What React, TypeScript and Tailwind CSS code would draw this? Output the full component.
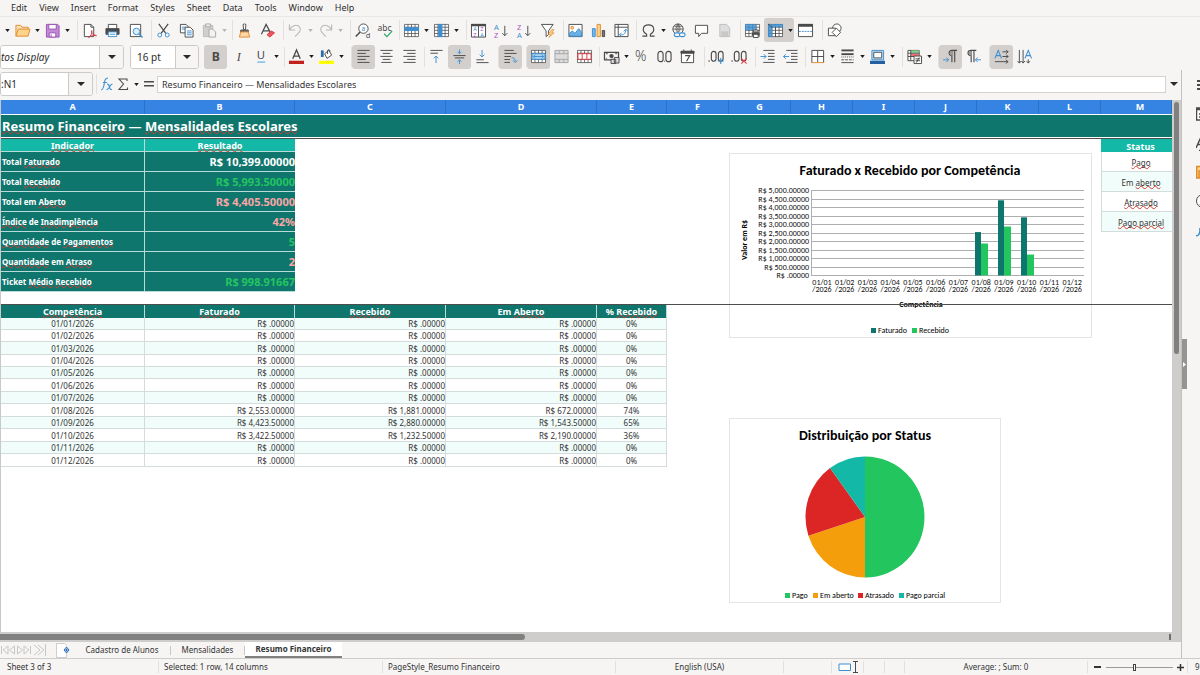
import React from "react";

const K = "#4a4a4a";
const B = "#3d8fd1";
const O = "#e08a2e";

type Drawn = Record<string, React.ReactNode>;

const sheetGrid = (
  <path d="M.5 1.5h15v13H.5zM.5 4.5h15M.5 7.8h15M.5 11.2h15M4.2 1.5v13M8 1.5v13M11.8 1.5v13" stroke={K} strokeWidth=".8" fill="#fff" />
);

const letters = { fontFamily: "'Noto Sans', sans-serif", stroke: "none" };

const icons: Drawn = {
  open: (
    <>
      <path d="M1 14V2.5h5l1.5 2H14V7" fill="#fbe3b5" stroke={O} />
      <path d="M1 14 3.5 6.5H16L14 14z" fill="#fcd48a" stroke={O} />
    </>
  ),
  save: (
    <>
      <path d="M1.5 1.500h12l1.500 1.500v12h-13.500z" fill="#c58ad6" stroke="#9a4fb3" />
      <path d="M4 1.500h8v5H4z" fill="#fff" stroke="#9a4fb3" />
      <path d="M4.500 10.500h7v4.500h-7z" fill="#fff" stroke="#9a4fb3" />
      <path d="M6.500 12v3" stroke="#9a4fb3" />
    </>
  ),
  pdf: (
    <>
      <path d="M2.500 1.500h7l3 3v10h-10z" fill="#fff" stroke={K} />
      <path d="M9.500 1.500v3h3" stroke={K} />
      <path d="M7 15.500c3-2 4-5 3.500-7.500-1.500 1 1 6 5 5.500-2-1.500-6 0-8.500 2z" stroke="#d9363e" />
    </>
  ),
  print: (
    <>
      <path d="M3.500 6V1.500h9V6" fill="#fff" stroke={K} />
      <path d="M1 6h14v6H1z" fill={K} stroke={K} />
      <path d="M3.500 9.500h9v5h-9z" fill="#fff" stroke={B} />
      <path d="M5 12h6" stroke={B} />
    </>
  ),
  preview: (
    <>
      <path d="M2.500 1.500h11v13h-11z" fill="#fff" stroke={K} />
      <circle cx="9" cy="9" r="3.500" fill="#dceefa" stroke={B} />
      <path d="M11.500 11.500l4 4" stroke={B} strokeWidth="1.500" />
    </>
  ),
  cut: (
    <>
      <path d="M3 1l7.500 10M13 1L5.500 11" stroke={K} strokeWidth="1.300" />
      <circle cx="4" cy="12.800" r="2.100" stroke={B} />
      <circle cx="12" cy="12.800" r="2.100" stroke={B} />
    </>
  ),
  copy: (
    <>
      <path d="M1.500 1.500h6l2 2v7h-8z" fill="#fff" stroke={K} />
      <path d="M3 4.500h4M3 6.500h4" stroke={B} />
      <path d="M6.500 4.500h5.500l3 3v7.500H6.500z" fill="#fff" stroke={K} />
      <path d="M8.500 8.500h5M8.500 10.500h5M8.500 12.500h5" stroke={B} />
    </>
  ),
  paste: (
    <>
      <path d="M1.500 2.500h10v12h-10z" fill="#cfcfcf" stroke="#bdbdbd" />
      <path d="M4 1h5v3H4z" fill="#efefef" stroke="#a8a8a8" />
      <path d="M7.500 6.500h4l3 3v5.500h-7z" fill="#f2f2f2" stroke="#a8a8a8" />
    </>
  ),
  brush: (
    <>
      <path d="M6.500 1.500q1.500-1 3 0L9 7H7z" fill="#fff" stroke={K} />
      <path d="M4 7.500h8v2H4z" fill="#777" stroke={K} />
      <path d="M4 9.500h8l1.500 5.500h-11z" fill="#fcd9a5" stroke={O} />
    </>
  ),
  clearfmt: (
    <>
      <path d="M1.500 12L6.500 1.500 11 10M3.500 8.500h6" stroke={K} strokeWidth="1.300" />
      <path d="M7.500 12.500l4.500-4 3.500 2-5 4.500z" fill="#ee5560" stroke="#d9363e" />
    </>
  ),
  undo: (
    <path d="M1.500 1.500v6h6M1.500 7.500C4 2 10 1 12.500 4.500c2 3 0 5-5 10" stroke="#b9b9b9" strokeWidth="1.200" />
  ),
  redo: (
    <path d="M14.500 1.500v6h-6M14.500 7.500C12 2 6 1 3.500 4.500c-2 3 0 5 5 10" stroke="#b9b9b9" strokeWidth="1.200" />
  ),
  find: (
    <>
      <circle cx="9" cy="6" r="5" fill="#fff" stroke={K} />
      <path d="M5.500 9.500L.8 14.500" stroke={K} strokeWidth="1.600" />
      <text x="6.800" y="8.300" fontSize="7" fill={B} style={letters}>a</text>
      <text x="11.500" y="15.800" fontSize="8" fill={K} style={letters}>d</text>
    </>
  ),
  abc: (
    <>
      <text x="-.5" y="8" fontSize="9" fill={K} style={letters}>abc</text>
      <path d="M6.500 11.500l3 3L15 8.500" stroke="#35a86b" strokeWidth="1.300" />
    </>
  ),
  row: (
    <>
      {sheetGrid}
      <path d="M0 4.500h16v4H0z" fill={B} />
    </>
  ),
  column: (
    <>
      {sheetGrid}
      <path d="M4.500 1h4.500v14H4.500z" fill={B} />
    </>
  ),
  sort: (
    <>
      <path d="M.5 1.500h15v13.500H.5zM8 3v12" fill="#fff" stroke={K} />
      <path d="M0 1h16v2.500H0z" fill={K} />
      <g fontSize="6">
        <text x="2.300" y="8.500" fill={B} style={letters}>A</text>
        <text x="2.300" y="14.500" fill="#b052c0" style={letters}>Z</text>
        <text x="9.800" y="8.500" fill="#b052c0" style={letters}>Z</text>
        <text x="9.800" y="14.500" fill={B} style={letters}>A</text>
      </g>
    </>
  ),
  az: (
    <>
      <text x="0" y="7" fontSize="8" fill={B} style={letters}>A</text>
      <text x="0" y="15.500" fontSize="8" fill="#b052c0" style={letters}>Z</text>
      <path d="M11.500 3v10.500M8.800 10.800l2.700 2.700 2.700-2.700" stroke={K} />
    </>
  ),
  za: (
    <>
      <text x="0" y="7" fontSize="8" fill="#b052c0" style={letters}>Z</text>
      <text x="0" y="15.500" fontSize="8" fill={B} style={letters}>A</text>
      <path d="M11.500 3v10.500M8.800 10.800l2.700 2.700 2.700-2.700" stroke={K} />
    </>
  ),
  filter: (
    <>
      <path d="M1.500 1.500h12.500L9 8.500v4l-2.500 2v-6z" fill="#fff" stroke={K} />
      <path d="M12.500 7l-3.500 5h2.500l-2 3.500 5.500-5h-2.500L15 7z" fill="#fcd48a" stroke={O} strokeWidth=".7" />
    </>
  ),
  image: (
    <>
      <path d="M1 1.500h14v13H1z" fill="#fff" stroke={K} />
      <circle cx="4.500" cy="5" r="1.500" fill="#fcd48a" stroke={O} />
      <path d="M1.500 14V11l3-2.500 3 2.500 4-5L14.500 10v4z" fill="#6db1e4" stroke={B} />
    </>
  ),
  chart: (
    <>
      <path d="M1.500 6h3v8.500h-3z" fill="#7ab8e8" stroke={B} />
      <path d="M6.500 1.500h3.500v13H6.500z" fill="#fcd48a" stroke={O} />
      <path d="M12 8h2.500v6.500H12z" fill="#777" stroke={K} />
    </>
  ),
  pivot: (
    <>
      <path d="M1 1.500h14v13H1zM4.500 1.500v13M1 4.500h14" fill="#fff" stroke={K} />
      <path d="M6 12.500c5 1 6.500-2 6.500-5.500M10.500 9l2-2.500L15 9M8 10.500L6 12.500l2 2" stroke={B} />
    </>
  ),
  omega: (
    <path d="M1.500 14h4.500v-2C.5 9 1.500 2 8 2s7.500 7 2 10v2h4.500" stroke={K} strokeWidth="1.200" />
  ),
  link: (
    <>
      <circle cx="7.500" cy="6.500" r="5.500" stroke={K} />
      <path d="M2 6.500h11M3.500 3.500h8M7.500 1v9M7.500 1q-4 5-.5 9M7.500 1q4 5 .5 9" stroke={K} strokeWidth=".8" />
      <rect x="3.500" y="10.500" width="6" height="4" rx="2" fill="#f6f5f4" stroke={B} strokeWidth="1.200" />
      <rect x="9" y="10.500" width="6" height="4" rx="2" fill="#f6f5f4" stroke={B} strokeWidth="1.200" />
    </>
  ),
  comment: <path d="M1.500 2.500h13v8.500H8l-3 3.500V11H1.500z" fill="#fff" stroke={K} />,
  header: (
    <>
      <path d="M3 1.500h7l3.500 3.500v9.500H3z" fill="#dedede" stroke="#bdbdbd" />
      <path d="M4.500 9h7.500v5H4.500z" fill="#c8c8c8" />
    </>
  ),
  printarea: (
    <>
      {sheetGrid}
      <path d="M0 1h12v7H0z" fill={B} opacity=".8" />
      <path d="M7 9.500h9v4.500H7z" fill={K} stroke="#f6f5f4" strokeWidth=".5" />
      <path d="M9 7.500h5v2H9zM9 12h5v3.500H9z" fill="#fff" stroke={K} />
    </>
  ),
  freeze: (
    <>
      {sheetGrid}
      <path d="M0 1h16v3.500H4.500V15H0z" fill={B} opacity=".85" />
      <path d="M8 4.500v10.500M0 1l5 4" stroke={K} />
    </>
  ),
  split: (
    <>
      <path d="M.5 1.500h15v13H.5z" fill="#fff" stroke={K} />
      <path d="M0 1h16v3H0z" fill={K} />
      <path d="M1 9h14" stroke={B} strokeDasharray="2 1" />
    </>
  ),
  shapes: (
    <>
      <circle cx="10.500" cy="5.500" r="4.500" fill="#fff" stroke={K} />
      <path d="M1.500 5.500h8v8h-8z" fill="#fff" stroke={K} />
      <path d="M10 5.500l4.500 4.500-4.500 4.500L5.500 10z" fill="#fff" stroke={K} />
    </>
  ),
  bold: (
    <text x="4" y="12.500" fontSize="13" fontWeight="700" fill={K} style={letters}>B</text>
  ),
  italic: (
    <text x="6" y="12.500" fontSize="13" fontStyle="italic" fill={K} style={{ fontFamily: "'Liberation Serif', serif" }}>I</text>
  ),
  underline: (
    <>
      <text x="3" y="11" fontSize="12" fill={K} style={letters}>U</text>
      <path d="M3.500 14h8.500" stroke="#7ab8e8" strokeWidth="1.500" />
    </>
  ),
  fontcolor: (
    <>
      <path d="M4 10.500L8 1l4 9.500M5.500 7.500h5" stroke={K} strokeWidth="1.400" />
      <path d="M0 12.500h16v3.500H0z" fill="#c3211c" />
    </>
  ),
  highlight: (
    <>
      <path d="M2 1.500h3v7H2z" fill="#2b6cab" />
      <path d="M6 5l4.500-3.500 3 5-5 3.500z" fill="#fff" stroke={K} />
      <path d="M9 5.500V1.500q2-2 3 1" stroke={K} />
      <path d="M0 12.500h16v3.500H0z" fill="#ffff00" />
    </>
  ),
  alignleft: <path d="M1.500 1.500h13M1.500 4.700h9M1.500 7.900h13M1.500 11.100h9M1.500 14.300h13" stroke={K} />,
  aligncenter: <path d="M1.500 1.500h13M4 4.700h8M1.500 7.900h13M4 11.100h8M2.500 14.300h11" stroke={K} />,
  alignright: <path d="M1.500 1.500h13M5.500 4.700h9M1.500 7.900h13M5.500 11.100h9M1.500 14.300h13" stroke={K} />,
  top: (
    <>
      <path d="M1.500 1.500h13M1.500 4.500h8" stroke={K} />
      <path d="M7.500 15V7.500M5 10l2.500-2.500L10 10" stroke={B} />
    </>
  ),
  middle: (
    <>
      <path d="M1.500 7h13M3 9.500h10" stroke={K} />
      <path d="M8 .5V5M6 3l2 2 2-2M8 16v-4.500M6 13.500l2-2 2 2" stroke={B} />
    </>
  ),
  bottom: (
    <>
      <path d="M1.500 11.500h8M1.500 14.500h13" stroke={K} />
      <path d="M7.500 1v7.500M5 6l2.500 2.500L10 6" stroke={B} />
    </>
  ),
  wrap: (
    <>
      <path d="M1.500 1.500h10M1.500 4.700h13M1.500 8h7M1.500 11.200h6M1.500 14.300h6" stroke={K} />
      <path d="M9 9.500q4-1 4 4M10.500 12l2.500 2.500 2.500-2.500" stroke={B} />
    </>
  ),
  merge: (
    <>
      {sheetGrid}
      <path d="M1 5h14v6H1z" fill="#a9d3f2" stroke={B} />
      <path d="M2.500 8h11M4.500 6l-2 2 2 2M11.500 6l2 2-2 2" stroke={B} />
    </>
  ),
  mergeonly: <path d="M1 1.500h14v13H1zM1 5h14M1 11h14M5.500 1.500V5M10.500 1.500V5M5.500 11v3.500M10.500 11v3.500" stroke="#a5a5a5" fill="#dcdcdc" />,
  unmerge: (
    <>
      {sheetGrid}
      <path d="M1 5h14v6H1zM5.500 5v6M10.500 5v6" fill="#fff" stroke="#d9363e" />
    </>
  ),
  currency: (
    <>
      <path d="M.5 3.500h15v8H.5z" fill="#f6f5f4" stroke={K} strokeWidth="1.300" />
      <circle cx="8" cy="7.500" r="2.300" fill={K} />
      <path d="M2 5h2M12 5h2M2 10h1" stroke={K} />
      <path d="M7.500 11h5v4.500h-5zM11 9h5v6h-5z" fill="#ddd" stroke={K} />
    </>
  ),
  percent: (
    <text x="1" y="13" fontSize="15" fill={K} style={letters} fontWeight="300">%</text>
  ),
  number: (
    <>
      <rect x="1" y="2.500" width="5.500" height="11" rx="2.700" stroke={K} strokeWidth="1.200" />
      <rect x="9.500" y="2.500" width="5.500" height="11" rx="2.700" stroke={K} strokeWidth="1.200" />
      <path d="M7.500 13h1" stroke={K} />
    </>
  ),
  date: (
    <>
      <path d="M1.500 2.500h13v12h-13z" fill="#fff" stroke={K} />
      <path d="M1 2.500h14v2H1zM4 .5v2M12 .5v2" fill={K} stroke={K} />
      <path d="M5.500 7h5L7 13" stroke={K} strokeWidth="1.200" />
    </>
  ),
  adddec: (
    <>
      <path d="M-.5 12.800h1.200" stroke={K} strokeWidth="1.500" />
      <rect x="2.500" y="2.500" width="5" height="10.500" rx="2.500" stroke={K} strokeWidth="1.200" />
      <rect x="10" y="2.500" width="5" height="10.500" rx="2.500" stroke={K} strokeWidth="1.200" />
      <path d="M12.500 9.500v6.500M9.300 12.800h6.500" stroke={B} strokeWidth="1.200" />
    </>
  ),
  deldec: (
    <>
      <path d="M-.5 12.800h1.200" stroke={K} strokeWidth="1.500" />
      <rect x="2.500" y="2.500" width="5" height="10.500" rx="2.500" stroke={K} strokeWidth="1.200" />
      <rect x="10" y="2.500" width="5" height="10.500" rx="2.500" stroke={K} strokeWidth="1.200" />
      <path d="M10 10l5.500 5.500M15.500 10L10 15.500" stroke="#e0404c" strokeWidth="1.200" />
    </>
  ),
  indent: (
    <>
      <path d="M3.500 1.500h12M8.500 4.700h7M8.500 7.900h7M8.500 11.100h7M3.500 14.300h12" stroke={K} />
      <path d="M.5 8h6M4 5.500L6.500 8 4 10.500" stroke={B} />
    </>
  ),
  outdent: (
    <>
      <path d="M3.500 1.500h12M8.500 4.700h7M8.500 7.900h7M8.500 11.100h7M3.500 14.300h12" stroke={K} />
      <path d="M.5 8h6M3 5.500L.5 8 3 10.500" stroke={B} />
    </>
  ),
  borders: (
    <>
      <path d="M2 14.500v-13h12.500v13M8.200 1.500v13M2 8h12.500" fill="#fff" stroke={K} />
      <path d="M1.500 14.500H15" stroke={O} />
    </>
  ),
  linestyle: (
    <>
      <path d="M1.500 1.500h13" stroke={K} strokeWidth="2" />
      <path d="M1.500 5.500h13" stroke={K} strokeWidth="2" />
      <path d="M1.500 8.500h13" stroke={K} strokeDasharray="1 1" />
      <path d="M1.500 11.500h13" stroke={K} strokeDasharray="3 1" />
      <path d="M1.500 14.500h13" stroke={K} />
    </>
  ),
  bordercolor: (
    <>
      <path d="M2 1.500h12.500v10H2z" fill="#bfe0f7" stroke={B} />
      <path d="M4 3.500h8.500v6H4z" fill="#fff" stroke={K} />
      <path d="M0 12.500h16v3.500H0z" fill="#23609f" />
    </>
  ),
  conditional: (
    <>
      <path d="M1 1.500h12v11H1z" fill="#fff" stroke={K} />
      <path d="M4 1.500h9V4H4z" fill="#7ed389" />
      <path d="M4 5h9v3H4z" fill="#ee7078" />
      <path d="M1 4.500h12M1 8h12M4 1.500v11" stroke={K} />
      <path d="M7.500 7.500h8v8h-8z" fill="#fff" stroke={K} />
      <path d="M9 10.500h5M9 12.500h5M13 9l-3 5.500" stroke={K} />
    </>
  ),
  ltr: (
    <>
      <path d="M15 1.500H9.500c-4 0-4 5.500 0 5.500M9.500 1.500V14M12.500 1.500V14" stroke={K} strokeWidth="1.200" />
      <path d="M8 2h3v5H8q-2-2.500 0-5z" fill="#999" />
      <path d="M0 11.500h6M3.500 9L6 11.500 3.500 14" stroke={B} />
    </>
  ),
  rtl: (
    <>
      <path d="M11 1.500H5.500c-4.500 0-4.500 5.500 0 5.500M5.500 1.500V14M8.500 1.500V14" stroke={K} strokeWidth="1.200" />
      <path d="M4 2h2v5H4q-2-2.500 0-5z" fill="#999" />
      <path d="M10 11.500h6M12.500 9L10 11.500l2.500 2.500" stroke={B} />
    </>
  ),
  texth: (
    <>
      <path d="M1 10L4.500 1.500 8 10M2 7h5" stroke={B} strokeWidth="1.200" />
      <path d="M9 3h6M13 1l2 2-2 2M9 8h6M13 6l2 2-2 2M1 13.500h14M12.500 11.500l2.500 2-2.500 2" stroke={K} />
    </>
  ),
  textv: (
    <>
      <path d="M8.500 10L12 1.500l3.500 8.500M9.500 7h5" stroke={B} strokeWidth="1.200" />
      <path d="M2.500 1v14M.5 12.800l2 2.200 2-2.200M6.500 1v14M4.800 12.800L6.500 15l2-2.200M12 11v4M10.200 13l1.800 2 1.800-2" stroke={K} />
    </>
  ),
};

function Icon({ name }: { name: string }) {
  return (
    <svg viewBox="0 0 16 16" fill="none" className="h-[15px] w-[15px] shrink-0 overflow-visible" aria-hidden="true">
      {icons[name]}
    </svg>
  );
}

function Caret({ faded = false }: { faded?: boolean }) {
  return (
    <svg viewBox="0 0 6 4" className="h-[3px] w-[5px] shrink-0" aria-hidden="true">
      <path d="M0 0h6L3 4z" fill={faded ? "#b5b5b5" : "#1c1c1c"} />
    </svg>
  );
}

type Tool = { n: string; menu?: boolean; faded?: boolean; on?: boolean };

function ToolButton({ tool }: { tool: Tool }) {
  const tone = tool.on ? "bg-[#d3cfcc]" : "hover:bg-[#e6e3e1]";
  return (
    <div className={`flex h-6 shrink-0 items-center rounded-[3px] ${tone}`}>
      <button type="button" aria-label={tool.n} className="flex h-6 w-[23px] items-center justify-center">
        <Icon name={tool.n} />
      </button>
      {tool.menu && (
        <button type="button" aria-label={`${tool.n} options`} className="flex h-6 w-[7px] items-center justify-center">
          <Caret faded={tool.faded} />
        </button>
      )}
    </div>
  );
}

type Group = { w: string; tools: Tool[] };

function ToolGroup({ group, last }: { group: Group; last: boolean }) {
  return (
    <div className={`flex shrink-0 items-center ${group.w}`}>
      {group.tools.map((t) => (
        <ToolButton key={t.n} tool={t} />
      ))}
      {!last && <span className="ml-auto h-5 w-px bg-[#e2dfdc]" />}
    </div>
  );
}

const standard: Group[] = [
  { w: "w-[67px]", tools: [{ n: "open", menu: true }, { n: "save", menu: true }] },
  { w: "w-[74px]", tools: [{ n: "pdf" }, { n: "print" }, { n: "preview" }] },
  { w: "w-[81px]", tools: [{ n: "cut" }, { n: "copy" }, { n: "paste", menu: true, faded: true }] },
  { w: "w-[51px]", tools: [{ n: "brush" }, { n: "clearfmt" }] },
  { w: "w-[67px]", tools: [{ n: "undo", menu: true, faded: true }, { n: "redo", menu: true, faded: true }] },
  { w: "w-[49px]", tools: [{ n: "find" }, { n: "abc" }] },
  { w: "w-[67px]", tools: [{ n: "row", menu: true }, { n: "column", menu: true }] },
  { w: "w-[97px]", tools: [{ n: "sort" }, { n: "az" }, { n: "za" }, { n: "filter" }] },
  { w: "w-[73px]", tools: [{ n: "image" }, { n: "chart" }, { n: "pivot" }] },
  { w: "w-[104px]", tools: [{ n: "omega", menu: true }, { n: "link" }, { n: "comment" }, { n: "header" }] },
  { w: "w-[82px]", tools: [{ n: "printarea" }, { n: "freeze", menu: true, on: true }, { n: "split" }] },
  { w: "w-[30px]", tools: [{ n: "shapes" }] },
];

const formatting: Group[] = [
  { w: "w-[81px]", tools: [{ n: "bold", on: true }, { n: "italic" }, { n: "underline", menu: true }] },
  { w: "w-[67px]", tools: [{ n: "fontcolor", menu: true }, { n: "highlight", menu: true }] },
  { w: "w-[73px]", tools: [{ n: "alignleft", on: true }, { n: "aligncenter" }, { n: "alignright" }] },
  { w: "w-[74px]", tools: [{ n: "top" }, { n: "middle", on: true }, { n: "bottom" }] },
  { w: "w-[28px]", tools: [{ n: "wrap", on: true }] },
  { w: "w-[73px]", tools: [{ n: "merge", on: true }, { n: "mergeonly" }, { n: "unmerge" }] },
  { w: "w-[105px]", tools: [{ n: "currency", menu: true }, { n: "percent" }, { n: "number" }, { n: "date" }] },
  { w: "w-[51px]", tools: [{ n: "adddec" }, { n: "deldec" }] },
  { w: "w-[50px]", tools: [{ n: "indent" }, { n: "outdent" }] },
  { w: "w-[97px]", tools: [{ n: "borders", menu: true }, { n: "linestyle", menu: true }, { n: "bordercolor", menu: true }] },
  { w: "w-[36px]", tools: [{ n: "conditional", menu: true }] },
  { w: "w-[51px]", tools: [{ n: "ltr", on: true }, { n: "rtl" }] },
  { w: "w-[50px]", tools: [{ n: "texth", on: true }, { n: "textv" }] },
];

const menus = ["Edit", "View", "Insert", "Format", "Styles", "Sheet", "Data", "Tools", "Window", "Help"];

function Combo({ label, value, box, drop, italic }: { label: string; value: string; box: string; drop: string; italic?: boolean }) {
  return (
    <div className="flex h-6 shrink-0 overflow-hidden rounded-[3px] border border-[#cdc9c6] bg-white">
      <input
        aria-label={label}
        defaultValue={value}
        className={`h-full bg-white text-[10px] text-[#2a2a2a] outline-none ${box} ${italic ? "italic" : ""}`}
      />
      <button
        type="button"
        aria-label={`${label} list`}
        className={`flex h-full items-center justify-center border-l border-[#cdc9c6] bg-[#f6f5f4] ${drop}`}
      >
        <svg viewBox="0 0 8 4" className="h-1 w-2" aria-hidden="true">
          <path d="M0 0h8L4 4z" fill="#2a2a2a" />
        </svg>
      </button>
    </div>
  );
}

/* Words wrapped in underscores carry the spell-check wave. */
function Spell({ text }: { text: string }) {
  return (
    <>
      {text.split("_").map((part, i) =>
        i % 2 ? (
          <span key={i} className="underline decoration-[#d8392f] decoration-wavy decoration-1 -underline-offset-1 [text-decoration-skip-ink:none]">
            {part}
          </span>
        ) : (
          part
        ),
      )}
    </>
  );
}

const columns = ["A", "B", "C", "D", "E", "F", "G", "H", "I", "J", "K", "L", "M"];
const widths = ["w-[144px]", "w-[150px]", "w-[151px]", "w-[151px]", "w-[70px]", "w-[62px]", "w-[62px]", "w-[62px]", "w-[62px]", "w-[62px]", "w-[62px]", "w-[62px]", "w-auto"];

const indicators = [
  { label: "Total _Faturado_", value: "R$ 10,399.00000", tone: "text-white", status: "_Pago_" },
  { label: "Total _Recebido_", value: "R$ 5,993.50000", tone: "text-[#22c55e]", status: "Em _aberto_" },
  { label: "Total em _Aberto_", value: "R$ 4,405.50000", tone: "text-[#fca5a5]", status: "_Atrasado_" },
  { label: "_Índice_ de _Inadimplência_", value: "42%", tone: "text-[#fca5a5]", status: "_Pago parcial_" },
  { label: "_Quantidade_ de _Pagamentos_", value: "5", tone: "text-[#22c55e]", status: "" },
  { label: "_Quantidade_ em _Atraso_", value: "2", tone: "text-[#fca5a5]", status: "" },
  { label: "Ticket _Médio_ _Recebido_", value: "R$ 998.91667", tone: "text-[#22c55e]", status: "" },
];

const zero = "R$ .00000";
const months = [
  { h: "h-[12px]", v: ["01/01/2026", zero, zero, zero, "0%"] },
  { h: "h-[12px]", v: ["01/02/2026", zero, zero, zero, "0%"] },
  { h: "h-[13px]", v: ["01/03/2026", zero, zero, zero, "0%"] },
  { h: "h-[12px]", v: ["01/04/2026", zero, zero, zero, "0%"] },
  { h: "h-[12px]", v: ["01/05/2026", zero, zero, zero, "0%"] },
  { h: "h-[13px]", v: ["01/06/2026", zero, zero, zero, "0%"] },
  { h: "h-[12px]", v: ["01/07/2026", zero, zero, zero, "0%"] },
  { h: "h-[13px]", v: ["01/08/2026", "R$ 2,553.00000", "R$ 1,881.00000", "R$ 672.00000", "74%"] },
  { h: "h-[12px]", v: ["01/09/2026", "R$ 4,423.50000", "R$ 2,880.00000", "R$ 1,543.50000", "65%"] },
  { h: "h-[13px]", v: ["01/10/2026", "R$ 3,422.50000", "R$ 1,232.50000", "R$ 2,190.00000", "36%"] },
  { h: "h-[12px]", v: ["01/11/2026", zero, zero, zero, "0%"] },
  { h: "h-[13px]", v: ["01/12/2026", zero, zero, zero, "0%"] },
];

function SheetTable() {
  return (
    <table className="w-full table-fixed border-separate border-spacing-0 text-[8px] leading-[11px] text-[#333]">
      <colgroup>
        {widths.map((w, i) => (
          <col key={i} className={w} />
        ))}
      </colgroup>
      <thead>
        <tr className="h-[14px] bg-[#3584e4] text-[9px] text-white">
          {columns.map((c) => (
            <th key={c} scope="col" className={`border-r border-[#2a72c8] p-0 pb-px text-center font-bold ${c === "M" ? "pl-2" : ""}`}>
              {c}
            </th>
          ))}
        </tr>
      </thead>
      <tbody>
        <tr className="h-[24px]">
          <td colSpan={13} className="border-y border-white bg-[#0f766e] p-0 pt-px pl-px text-left text-[13px] leading-[21px] font-bold text-white">
            <Spell text="_Resumo_ _Financeiro_ — _Mensalidades_ _Escolares_" />
          </td>
        </tr>
        <tr className="h-[14px] text-[9px] leading-[11px] text-white">
          <th className="border-r border-b border-[#b9dcd8] bg-[#14b8a6] p-0 pt-[2px] font-bold"><Spell text="_Indicador_" /></th>
          <th className="border-b border-[#b9dcd8] bg-[#14b8a6] p-0 pt-[2px] font-bold"><Spell text="_Resultado_" /></th>
          <td colSpan={10} />
          <th className="bg-[#14b8a6] p-0 pt-[2px] pl-2 font-bold">Status</th>
        </tr>
        {indicators.map((r, i) => (
          <tr key={r.label} className="h-[20px]">
            <td className="border-r border-b border-[#b9dcd8] bg-[#0f766e] p-0 pl-px font-bold text-white"><Spell text={r.label} /></td>
            <td className={`border-b border-[#b9dcd8] bg-[#0f766e] p-0 text-right text-[11px] leading-[19px] font-bold ${r.tone}`}>{r.value}</td>
            <td colSpan={10} />
            {r.status ? (
              <td className={`border-b border-l border-[#d4dcdb] p-0 pt-px pl-2 text-center ${i % 2 ? "bg-[#f0fdfa]" : "bg-white"}`}>
                <Spell text={r.status} />
              </td>
            ) : (
              <td />
            )}
          </tr>
        ))}
        <tr className="h-[12px]">
          <td colSpan={13} />
        </tr>
        <tr className="h-[14px] text-[9px] leading-[11px] text-white">
          {["_Competência_", "_Faturado_", "_Recebido_", "Em _Aberto_", "% _Recebido_"].map((h) => (
            <th key={h} scope="col" className="border-r border-[#b9dcd8] bg-[#0f766e] p-0 pt-px text-center font-bold">
              <Spell text={h} />
            </th>
          ))}
          <td colSpan={8} />
        </tr>
        {months.map((m, i) => (
          <tr key={m.v[0]} className={m.h}>
            {m.v.map((v, j) => (
              <td
                key={j}
                className={`border-r border-b border-[#d4dcdb] p-0 ${i % 2 ? "bg-white" : "bg-[#f0fdfa]"} ${j > 0 && j < 4 ? "text-right" : "text-center"}`}
              >
                {v}
              </td>
            ))}
            <td colSpan={8} />
          </tr>
        ))}
      </tbody>
    </table>
  );
}

const axis = ["R$ 5,000.00000", "R$ 4,500.00000", "R$ 4,000.00000", "R$ 3,500.00000", "R$ 3,000.00000", "R$ 2,500.00000", "R$ 2,000.00000", "R$ 1,500.00000", "R$ 1,000.00000", "R$ 500.00000", "R$ .00000"];
const bars = [
  { i: 7, billed: 2553, received: 1881 },
  { i: 8, billed: 4423.5, received: 2880 },
  { i: 9, billed: 3422.5, received: 1232.5 },
];
const chartFont = { fontFamily: "Carlito, Lato, sans-serif" };

function BarChart() {
  const step = 22.75;
  const scale = 85 / 5000;
  return (
    <svg viewBox="0 0 363 186" className="block h-[186px] w-[363px]" role="img" aria-label="Faturado x Recebido por Competência" style={chartFont}>
      <rect x=".5" y=".5" width="362" height="184" fill="#fff" stroke="#e4e4e4" />
      <text x="181" y="22" textAnchor="middle" fontSize="14" fontWeight="700">Faturado x Recebido por Competência</text>
      {axis.map((a, i) => (
        <g key={a}>
          <path d={`M82 ${Math.round(37 + i * 8.5) + 0.5}h273`} stroke="#aeaeae" />
          <text x="80" y={Math.round(37 + i * 8.5) + 3} textAnchor="end" fontSize="8" fill="#111">{a}</text>
        </g>
      ))}
      <path d="M82.500 37v86" stroke="#aeaeae" />
      {bars.map((b) => (
        <g key={b.i}>
          <rect x={Math.round(87 + b.i * step)} y={122.5 - b.billed * scale} width="6" height={b.billed * scale} fill="#0f766e" />
          <rect x={Math.round(93 + b.i * step)} y={122.5 - b.received * scale} width="7" height={b.received * scale} fill="#22c55e" />
        </g>
      ))}
      {months.map((m, i) => (
        <g key={m.v[0]} fontSize="8" textAnchor="middle" fill="#111">
          <text x={93 + i * step} y="132">{m.v[0].slice(0, 5)}</text>
          <text x={93 + i * step} y="139">{m.v[0].slice(5)}</text>
        </g>
      ))}
      <text transform="translate(18 87) rotate(-90)" textAnchor="middle" fontSize="8" fontWeight="700">Valor em R$</text>
      <text x="192" y="154" textAnchor="middle" fontSize="8" fontWeight="700">Competência</text>
      <rect x="142" y="175" width="5" height="5" fill="#0f766e" />
      <text x="149" y="180" fontSize="8">Faturado</text>
      <rect x="183" y="175" width="5" height="5" fill="#22c55e" />
      <text x="190" y="180" fontSize="8">Recebido</text>
    </svg>
  );
}

function PieChart() {
  return (
    <svg viewBox="0 0 272 186" className="block h-[186px] w-[272px]" role="img" aria-label="Distribuição por Status" style={chartFont}>
      <rect x=".5" y=".5" width="271" height="184" fill="#fff" stroke="#e4e4e4" />
      <text x="136" y="22" textAnchor="middle" fontSize="14" fontWeight="700">Distribuição por Status</text>
      <g transform="translate(136 99)">
        <path d="M0 0V-60.500A59.500 60.500 0 0 1 0 60.500z" fill="#22c55e" />
        <path d="M0 0V60.500A59.500 60.500 0 0 1-56.600 18.700z" fill="#f59e0b" />
        <path d="M0 0L-56.600 18.700A59.500 60.500 0 0 1-35-48.900z" fill="#dc2626" />
        <path d="M0 0L-35-48.900A59.500 60.500 0 0 1 0-60.500z" fill="#14b8a6" />
      </g>
      <g fontSize="8">
        <rect x="56" y="175" width="5" height="5" fill="#22c55e" />
        <text x="63" y="180">Pago</text>
        <rect x="84" y="175" width="5" height="5" fill="#f59e0b" />
        <text x="91" y="180">Em aberto</text>
        <rect x="129" y="175" width="5" height="5" fill="#dc2626" />
        <text x="136" y="180">Atrasado</text>
        <rect x="170" y="175" width="5" height="5" fill="#14b8a6" />
        <text x="177" y="180">Pago parcial</text>
      </g>
    </svg>
  );
}

const panels = [
  { n: "Settings", d: <path d="M1 4h12M1 8h12M1 12h12" stroke={K} strokeWidth="2" /> },
  { n: "Properties", d: <path d="M.5 2h14v12H.5zM.5 3.500h14M3 8h8M3 11h8" stroke={K} strokeWidth="1.500" fill="#fff" /> },
  { n: "Text styles", d: <path d="M0 13L5 2l5 11M2 9.500h6M3 15.500h3" stroke={K} strokeWidth="1.500" /> },
  { n: "Gallery", d: <path d="M.7 14V2.500h5l2 2H15V14zM3 14V7h12" fill="#fcd48a" stroke={O} strokeWidth="1.500" /> },
  { n: "Navigator", d: <g stroke={K}><circle cx="7" cy="8" r="6.500" fill="#fff" /><path d="M10 4L6 7l-2 5 4-3z" /></g> },
  { n: "Functions", d: <path d="M0 13.500q3 1 4-4.500l1-5q1-3 4-2M3 7h6" stroke={B} strokeWidth="1.500" /> },
];

function SidePanel() {
  return (
    <aside className="relative w-[19px] shrink-0 border-l border-[#c3c0bd]">
      <div className="flex flex-col gap-[13px] overflow-hidden pt-[7px] pl-[14px]">
        {panels.map((p) => (
          <button key={p.n} type="button" aria-label={p.n} className="h-4 w-4">
            <svg viewBox="0 0 16 16" fill="none" className="h-4 w-4" aria-hidden="true">{p.d}</svg>
          </button>
        ))}
      </div>
      <button type="button" aria-label="Collapse sidebar" className="absolute top-[269px] left-0 flex h-[50px] w-[5px] items-center justify-center bg-[#969492]">
        <svg viewBox="0 0 3 5" className="h-[5px] w-[3px]" aria-hidden="true"><path d="M0 0l3 2.500L0 5z" fill="#fff" /></svg>
      </button>
    </aside>
  );
}

export default function App() {
  return (
    <div className="flex h-screen flex-col overflow-hidden bg-[#f6f5f4] font-['Noto_Sans',sans-serif] text-[9px] text-[#333]">
      <nav className="flex h-[17px] shrink-0 items-center gap-3 border-b border-[#eae8e6] pl-[11px] text-[#2f2f2f]">
        {menus.map((m) => (
          <button key={m} type="button" className="leading-4">{m}</button>
        ))}
      </nav>

      <div className="flex h-[26px] shrink-0 items-center overflow-hidden">
        <button type="button" aria-label="New options" className="flex h-6 w-[11px] shrink-0 items-center justify-end pr-[1px]"><Caret /></button>
        {standard.map((g, i) => (
          <ToolGroup key={i} group={g} last={i === standard.length - 1} />
        ))}
      </div>

      <div className="flex h-[27px] shrink-0 items-center overflow-hidden">
        <Combo label="Font name" value="tos Display" italic box="w-[98px] pl-0" drop="w-6" />
        <div className="w-[6px] shrink-0" />
        <Combo label="Font size" value="16 pt" box="w-[44px] pl-[6px]" drop="w-[23px]" />
        <div className="w-[5px] shrink-0" />
        {formatting.map((g, i) => (
          <ToolGroup key={i} group={g} last={i === formatting.length - 1} />
        ))}
      </div>

      <main className="flex min-h-0 flex-1">
        <div className="flex min-w-0 flex-1 flex-col">
          <div className="flex h-[30px] shrink-0 items-center pb-[2px]">
            <Combo label="Name box" value=":N1" box="w-[67px]" drop="w-6" />
            <span className="mx-[3px] h-5 w-px bg-[#e2dfdc]" />
            <button type="button" aria-label="Function wizard" className="w-[17px]">
              <svg viewBox="0 0 14 14" fill="none" className="h-[14px] w-[14px]" aria-hidden="true">
                <path d="M1 13q2 0 3-5l1-5q1-2 3-2M3 5.500h4M7 7q2 0 2.500 3t2.500 2.500M12.500 7Q11 7 9.500 10T6.500 12.500" stroke={B} strokeWidth="1.100" />
              </svg>
            </button>
            <button type="button" aria-label="Sum" className="w-[14px]">
              <svg viewBox="0 0 12 14" fill="none" className="h-[14px] w-[12px]" aria-hidden="true">
                <path d="M10 4V2H2l4.500 5L2 12.500h8.500v-2" stroke={K} strokeWidth="1.100" />
              </svg>
            </button>
            <button type="button" aria-label="Sum options" className="flex w-[10px] justify-center"><Caret /></button>
            <button type="button" aria-label="Formula" className="ml-[3px] w-[13px]">
              <svg viewBox="0 0 10 6" className="h-[6px] w-[10px]" aria-hidden="true"><path d="M0 0h10v1.500H0zM0 4h10v1.500H0z" fill="#4a4a4a" /></svg>
            </button>
            <input
              aria-label="Formula input"
              defaultValue="Resumo Financeiro — Mensalidades Escolares"
              className="h-[17px] min-w-0 flex-1 border border-[#d5d2cf] bg-white pl-1 outline-none"
            />
            <button type="button" aria-label="Expand formula bar" className="flex w-[15px] items-center justify-center">
              <svg viewBox="0 0 8 4" className="h-1 w-2" aria-hidden="true"><path d="M0 0h8L4 4z" fill="#2a2a2a" /></svg>
            </button>
          </div>

          <div className="flex min-h-0 flex-1">
            <div className="w-px shrink-0 bg-[#c9c9c9]" />
            <div className="relative min-w-0 flex-1 overflow-hidden bg-white">
              <SheetTable />
              <div className="absolute top-[53px] left-[728px]"><BarChart /></div>
              <div className="absolute top-[318px] left-[728px]"><PieChart /></div>
              <div className="absolute top-[38px] h-px w-full bg-[#4d4d4d]" />
              <div className="absolute top-[204px] h-px w-full bg-[#4d4d4d]" />
            </div>
            <div className="w-[9px] shrink-0 bg-[#cecdcc] px-[2px] pt-[2px]">
              <div className="h-[252px] rounded-full bg-[#7f807f]" />
            </div>
          </div>

          <div className="flex h-[10px] shrink-0 items-center bg-[#cecdcc] pr-[10px]">
            <div className="h-[6px] w-[525px] rounded-r-full bg-[#7f807f]" />
            <div className="ml-auto h-[6px] w-[2px] bg-[#6f6f6f]" />
          </div>

          <div className="flex h-4 shrink-0 items-center text-[8px]">
            <svg viewBox="0 0 48 12" fill="none" className="h-3 w-[48px] shrink-0" aria-hidden="true">
              <path d="M1.500 2v8M8 2L3 6l5 4zM14.500 2l-5 4 5 4zM17.500 2l5 4-5 4zM24 2l5 4-5 4zM30.500 2v8M34 1l6 5-6 5M38 1l6 5-6 5M45.500 0v12" stroke="#c9c7c5" />
            </svg>
            <button type="button" aria-label="Add sheet" className="ml-2 flex h-4 w-[14px] items-center">
              <svg viewBox="0 0 14 15" fill="none" className="h-[15px] w-[14px]" aria-hidden="true">
                <path d="M.5.500h8l2 2v12H.5z" fill="#fff" stroke="#cfcdcb" />
                <path d="M10.500 4l2.500 3-2.500 3L8 7zM10.500 5.500v3M9 7h3" fill="#fff" stroke="#2a6db5" />
              </svg>
            </button>
            <button type="button" className="ml-[4px] w-[96px] text-center leading-4">Cadastro de Alunos</button>
            <span className="h-[9px] w-px bg-[#c9c7c5]" />
            <button type="button" className="w-[73px] text-center leading-4">Mensalidades</button>
            <span className="h-[9px] w-px bg-[#c9c7c5]" />
            <button type="button" className="h-4 w-[97px] border-b-2 border-[#7f807f] bg-white text-center leading-[14px] font-bold">Resumo Financeiro</button>
          </div>
        </div>
        <SidePanel />
      </main>

      <footer className="flex h-[17px] shrink-0 items-center border-t border-[#cfccc9] text-[8px]">
        <span className="w-[158px] pl-[7px]">Sheet 3 of 3</span>
        <span className="h-3 w-px bg-[#e2dfdc]" />
        <span className="w-[223px] pl-[5px]">Selected: 1 row, 14 columns</span>
        <span className="h-3 w-px bg-[#e2dfdc]" />
        <span className="w-[232px] pl-[5px]">PageStyle_Resumo Financeiro</span>
        <span className="h-3 w-px bg-[#e2dfdc]" />
        <span className="w-[167px] text-center">English (USA)</span>
        <span className="h-3 w-px bg-[#e2dfdc]" />
        <span className="w-[47px]" />
        <span className="h-3 w-px bg-[#e2dfdc]" />
        <button type="button" aria-label="Selection mode" className="flex w-[31px] justify-center">
          <svg viewBox="0 0 20 12" fill="none" className="h-3 w-5" aria-hidden="true">
            <path d="M1 3h11.500v6.500H1z" fill="#fff" stroke={B} />
            <path d="M15 .5h5M17.500.500v11M15 11.500h5" stroke={K} />
          </svg>
        </button>
        <span className="h-3 w-px bg-[#e2dfdc]" />
        <span className="w-[20px]" />
        <span className="h-3 w-px bg-[#e2dfdc]" />
        <span className="w-[19px]" />
        <span className="h-3 w-px bg-[#e2dfdc]" />
        <span className="min-w-0 flex-1 text-center">Average: ; Sum: 0</span>
        <span className="h-3 w-px bg-[#e2dfdc]" />
        <button type="button" aria-label="Zoom out" className="flex w-[18px] justify-center"><span className="h-[2px] w-[7px] bg-[#333]" /></button>
        <input
          type="range"
          aria-label="Zoom"
          defaultValue={42}
          className="h-[9px] w-[67px] appearance-none bg-[linear-gradient(#9a9a9a,#9a9a9a)] bg-[length:100%_1px] bg-center bg-no-repeat [&::-webkit-slider-thumb]:h-[7px] [&::-webkit-slider-thumb]:w-[3px] [&::-webkit-slider-thumb]:appearance-none [&::-webkit-slider-thumb]:border [&::-webkit-slider-thumb]:border-[#444] [&::-webkit-slider-thumb]:bg-[#f6f5f4]"
        />
        <button type="button" aria-label="Zoom in" className="flex w-[14px] justify-center">
          <svg viewBox="0 0 7 7" className="h-[7px] w-[7px]" aria-hidden="true"><path d="M0 3.500h7M3.500 0v7" stroke="#333" strokeWidth="1.500" /></svg>
        </button>
        <span className="h-3 w-px bg-[#e2dfdc]" />
        <span className="w-[12px] pl-[7px]">9</span>
      </footer>
    </div>
  );
}
